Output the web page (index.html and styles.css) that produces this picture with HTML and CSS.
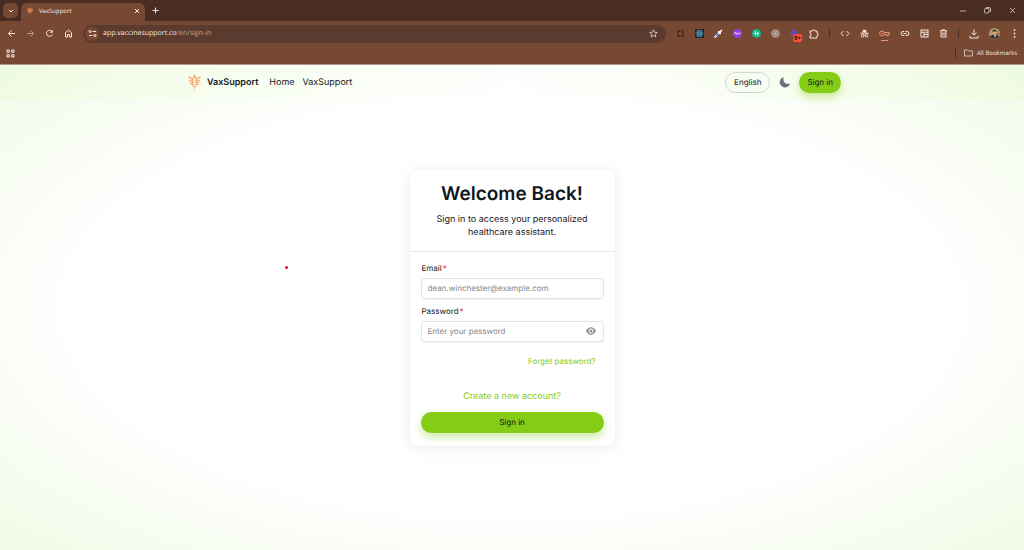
FILE: index.html
```html
<!DOCTYPE html>
<html lang="en">
<head>
    <meta charset="UTF-8">
    <meta name="viewport" content="width=device-width, initial-scale=1.0">
    <title>VaxSupport</title>
    <link rel="stylesheet" href="styles.css">
</head>
<body>

<!-- Browser window -->
<div class="browser">
    <div class="tab-strip">
        <button class="tab-search" aria-label="Search tabs">
            <svg width="6" height="6" viewBox="0 0 6 6"><path d="M1 2l2 2 2-2" class="line"/></svg>
        </button>
        <div class="tab">
            <svg width="6" height="8" viewBox="0 0 12 16"><path d="M6 0l2 3 4 0-1 6-4 3-1 4-1-4-4-3-1-6h4z" fill="#c77b4c"/></svg>
            <span class="tab-title">VaxSupport</span>
            <button class="icon-button" aria-label="Close tab">
                <svg width="6" height="6" viewBox="0 0 6 6"><path d="M1 1l4 4M5 1l-4 4" class="line"/></svg>
            </button>
        </div>
        <button class="new-tab" aria-label="New tab">
            <svg width="7" height="7" viewBox="0 0 7 7"><path d="M3.500 .5v6M.5 3.500h6" class="line"/></svg>
        </button>
        <div class="window-controls">
            <button class="icon-button" aria-label="Minimize">
                <svg width="6" height="6" viewBox="0 0 6 6"><path d="M0 3h6" class="line thin"/></svg>
            </button>
            <button class="icon-button" aria-label="Restore">
                <svg width="7" height="7" viewBox="0 0 7 7"><rect x=".5" y="1.500" width="4.500" height="4.500" rx="1" class="line thin"/><path d="M2 .5h3q1.500 0 1.500 1.500v3" class="line thin"/></svg>
            </button>
            <button class="icon-button" aria-label="Close">
                <svg width="7" height="7" viewBox="0 0 7 7"><path d="M1 1l5 5M6 1l-5 5" class="line thin"/></svg>
            </button>
        </div>
    </div>

    <div class="toolbar">
        <div class="tools">
            <button class="icon-button" aria-label="Back">
                <svg width="9" height="9" viewBox="0 0 9 9"><path d="M8 4.500H1.500M4.500 1.500l-3 3 3 3" class="line"/></svg>
            </button>
            <button class="icon-button faded" aria-label="Forward">
                <svg width="9" height="9" viewBox="0 0 9 9"><path d="M1 4.500h6.500M4.500 1.500l3 3-3 3" class="line"/></svg>
            </button>
            <button class="icon-button" aria-label="Reload">
                <svg width="9" height="9" viewBox="0 0 9 9"><path d="M7.300 5.500a3 3 0 1 1-.4-3" class="line"/><path d="M7.800 .8v3H4.800z" fill="#f6e9e3"/></svg>
            </button>
            <button class="icon-button" aria-label="Home">
                <svg width="9" height="9" viewBox="0 0 9 9"><path d="M1.500 3.700l3-2.500 3 2.500V8h-2V5.500h-2V8h-2z" class="line"/></svg>
            </button>
        </div>
        <div class="address">
            <button class="site-info" aria-label="Site information">
                <svg width="9" height="9" viewBox="0 0 9 9"><path d="M4.500 2.500H8M1 6.500h3.500" class="line"/><circle cx="2" cy="2.500" r="1" class="line"/><circle cx="7" cy="6.500" r="1" class="line"/></svg>
            </button>
            <span class="url">app.vaccinesupport.co<span class="path">/en/sign-in</span></span>
            <button class="icon-button" aria-label="Bookmark this page">
                <svg width="9" height="9" viewBox="0 0 9 9"><path d="M4.500 .8l1.100 2.500 2.700.2-2.100 1.800.7 2.700-2.400-1.500L2.100 8l.7-2.700L.7 3.500l2.700-.2z" class="line thin"/></svg>
            </button>
        </div>
        <div class="tools">
            <button class="icon-button" aria-label="Sync">
                <svg width="9" height="9" viewBox="0 0 9 9"><circle cx="4.500" cy="4.500" r="3" fill="none" stroke="#2b211d" stroke-width="1.200" stroke-dasharray="3.700 1"/></svg>
            </button>
            <button class="icon-button" aria-label="React tools">
                <svg width="9" height="9" viewBox="0 0 9 9"><rect width="9" height="9" fill="#20262b"/><g fill="none" stroke="#4aa9c9" stroke-width=".7"><ellipse cx="4.500" cy="4.500" rx="3.800" ry="1.500"/><ellipse cx="4.500" cy="4.500" rx="3.800" ry="1.500" transform="rotate(60 4.500 4.500)"/><ellipse cx="4.500" cy="4.500" rx="3.800" ry="1.500" transform="rotate(120 4.500 4.500)"/></g><circle cx="4.500" cy="4.500" r=".8" fill="#4aa9c9"/></svg>
            </button>
            <button class="icon-button" aria-label="Color picker">
                <svg width="9" height="9" viewBox="0 0 9 9"><path d="M1.300 7.700l3.700-3.700" stroke="#f4f4fa" stroke-width="2.200" stroke-linecap="round"/><path d="M2 7l2.500-2.500" stroke="#4762c9" stroke-width="1.200"/><path d="M4.700 2.700l1.600 1.600M6 3l1.500-1.500" stroke="#fff" stroke-width="1.700" stroke-linecap="round"/></svg>
            </button>
            <button class="icon-button" aria-label="Wave extension">
                <svg width="9" height="9" viewBox="0 0 9 9"><circle cx="4.500" cy="4.500" r="4.500" fill="#963ee8"/><path d="M1.500 5q.2-1.500 1-1.500T3.500 5q.8 1 1.200-.3.5-1.500 1.200-.7.600 1.500 1.600 0" fill="none" stroke="#fff" stroke-width=".8"/></svg>
            </button>
            <button class="icon-button" aria-label="Switch extension">
                <svg width="9" height="9" viewBox="0 0 9 9"><circle cx="4.500" cy="4.500" r="4.500" fill="#11b784"/><path d="M3.300 2v3M2 4.200l1.300 1.300 1.300-1.300M5.800 7V4M4.500 4.800l1.300-1.300 1.300 1.300" fill="none" stroke="#fff" stroke-width=".9"/></svg>
            </button>
            <button class="icon-button" aria-label="Target extension">
                <svg width="9" height="9" viewBox="0 0 9 9"><circle cx="4.500" cy="4.500" r="4.500" fill="#9b8077"/><circle cx="4.500" cy="4.500" r="2.700" fill="none" stroke="#c5b1aa" stroke-width=".7"/><circle cx="4.500" cy="4.500" r="1" fill="#d8c8c2"/></svg>
            </button>
            <button class="icon-button badged" aria-label="Blocker extension">
                <svg width="9" height="9" viewBox="0 0 9 9"><circle cx="4.500" cy="4.500" r="3" fill="#5b45a7" stroke="#6c55bf" stroke-width="2" stroke-dasharray="1.300 1"/></svg>
                <span class="badge">9+</span>
            </button>
            <button class="icon-button" aria-label="Extensions">
                <svg width="10" height="10" viewBox="0 0 10 10"><path d="M1 2h2.500q0-1.200 1.200-1.200T6 2h2v2.300q1.300 0 1.300 1.200T8 6.700V9H1V6.800q1.300 0 1.300-1.300T1 4.200z" class="line"/></svg>
            </button>
            <span class="divider"></span>
            <button class="icon-button" aria-label="View source">
                <svg width="10" height="9" viewBox="0 0 10 9"><path d="M3.500 2L1 4.500 3.500 7M6.500 2L9 4.500 6.500 7" class="line"/></svg>
            </button>
            <button class="icon-button" aria-label="Incognito">
                <svg width="9" height="9" viewBox="0 0 9 9"><path d="M2.500 3.500l.5-2.700h3l.500 2.700z" fill="#f6e9e3"/><path d="M.5 4.200h8M3.700 6.400h1.600" class="line"/><circle cx="2.500" cy="6.700" r="1.300" class="line"/><circle cx="6.500" cy="6.700" r="1.300" class="line"/></svg>
            </button>
            <button class="icon-button active" aria-label="Passwords">
                <svg width="11" height="9" viewBox="0 0 11 9"><circle cx="3" cy="4.500" r="2.400" class="accent"/><circle cx="3" cy="4.500" r=".7" fill="#ee9378"/><path d="M5.200 3.500h5v2h-1v1.300H7.700V5.500H5.200" class="accent"/></svg>
            </button>
            <button class="icon-button" aria-label="Copy link">
                <svg width="10" height="9" viewBox="0 0 10 9"><path d="M4.300 2.500H3a2 2 0 0 0 0 4h1.300M5.700 2.500H7a2 2 0 0 1 0 4H5.700M3.300 4.500h3.400" class="line"/></svg>
            </button>
            <button class="icon-button" aria-label="Reading mode">
                <svg width="9" height="9" viewBox="0 0 9 9"><rect x="1" y="1" width="7" height="7" class="line"/><path d="M1 3.200h7M4 3.200V8M4 5.500h4" class="line"/></svg>
            </button>
            <button class="icon-button" aria-label="Delete browsing data">
                <svg width="9" height="9" viewBox="0 0 9 9"><path d="M1 1.700h7M3.200 .8h2.600M2 2v6h5V2M3.800 3.500v3M5.200 3.500v3" class="line"/></svg>
            </button>
            <span class="divider"></span>
            <button class="icon-button" aria-label="Downloads">
                <svg width="10" height="10" viewBox="0 0 10 10"><path d="M5 .5v5.500M2.500 3.700L5 6.200l2.500-2.500M1 6.800V9h8V6.800" class="line"/></svg>
            </button>
            <button class="icon-button" aria-label="Profile">
                <svg width="11" height="11" viewBox="0 0 11 11"><circle cx="5.500" cy="5.500" r="5.500" fill="#a99b68"/><path d="M1 8.500q4.500-4 9 0a5.500 5.500 0 0 1-9 0z" fill="#302a28"/><path d="M5 7l1 3 1-3z" fill="#e8e0dc"/><circle cx="5.500" cy="4.500" r="2.200" fill="#d4a386"/><path d="M3.200 4q.300-2.500 2.300-2.500T7.800 4Q5 2.500 3.200 4z" fill="#30221c"/><circle cx="8.800" cy="6" r="1" fill="#b83528"/></svg>
            </button>
            <button class="icon-button" aria-label="Menu">
                <svg width="3" height="9" viewBox="0 0 3 9"><g fill="#f6e9e3"><circle cx="1.500" cy="1" r=".9"/><circle cx="1.500" cy="4.500" r=".9"/><circle cx="1.500" cy="8" r=".9"/></g></svg>
            </button>
        </div>
    </div>

    <div class="bookmarks">
        <button class="icon-button" aria-label="Apps">
            <svg width="9" height="9" viewBox="0 0 9 9"><path d="M1 1h2.300v2.300H1zM5.700 1H8v2.300H5.700zM1 5.700h2.300V8H1zM5.700 5.700H8V8H5.700z" class="line"/></svg>
        </button>
        <div class="all-bookmarks">
            <span class="divider"></span>
            <svg width="9" height="8" viewBox="0 0 9 8"><path d="M.5 1h3l1 1h4v5h-8z" class="line thin"/></svg>
            <a href="#">All Bookmarks</a>
        </div>
    </div>
</div>

<!-- Page -->
<div class="page">
    <header class="header">
        <nav class="navbar">
            <a href="#" class="brand">
                <svg width="13" height="17" viewBox="0 0 13 17">
                    <path d="M6.500 0l1.400 2.700-.8 1.300h-1.200l-.8-1.300zM5.900 12h1.200l-.6 5z" fill="#f9a66f"/>
                    <g fill="none" stroke="#f9ac78" stroke-width="1.500">
                        <path d="M.5 2.500l2 1.700h2.300v7M12.500 2.500l-2 1.700H8.200v7"/>
                        <path d="M1 6.300h3.500M1.500 8.300h3M2.300 10.300h2.500M12 6.300H8.500M11.500 8.300h-3M10.700 10.300H8.200" stroke-width="1.200"/>
                    </g>
                    <path d="M4.200 11l2.300 2 2.300-2" fill="none" stroke="#f9ac78"/>
                </svg>
                <span>VaxSupport</span>
            </a>
            <a href="#" class="nav-link">Home</a>
            <a href="#" class="nav-link">VaxSupport</a>
            <div class="nav-actions">
                <button class="button language">English</button>
                <button class="theme" aria-label="Dark mode">
                    <svg width="11" height="11" viewBox="0 0 11 11"><path d="M4.200 .5A5 5 0 1 0 10.700 6.900Q6.800 8 5 5.500Q3.700 3 4.200 .5z" fill="#6c6c76" stroke="#6c6c76" stroke-width=".6" stroke-linejoin="round"/></svg>
                </button>
                <button class="button primary">Sign in</button>
            </div>
        </nav>
    </header>

    <span class="pointer-dot"></span>

    <main class="content">
        <form class="card">
            <div class="card-header">
                <h1>Welcome Back!</h1>
                <p>Sign in to access your personalized healthcare assistant.</p>
            </div>
            <div class="card-body">
                <label for="email">Email<span class="required">*</span></label>
                <div class="field">
                    <input type="email" id="email" placeholder="dean.winchester@example.com">
                </div>
                <label for="password">Password<span class="required">*</span></label>
                <div class="field">
                    <input type="password" id="password" placeholder="Enter your password">
                    <button type="button" class="reveal" aria-label="Show password">
                        <svg width="10" height="8" viewBox="0 0 10 8"><path d="M0 4Q2 .3 5 .3T10 4Q8 7.700 5 7.700T0 4z" fill="#8f8f98"/><circle cx="5" cy="4" r="2.400" fill="#fff"/><circle cx="5" cy="4" r="1.500" fill="#8f8f98"/></svg>
                    </button>
                </div>
                <a href="#" class="forget">Forget password?</a>
                <a href="#" class="create">Create a new account?</a>
                <button type="submit" class="button primary">Sign in</button>
            </div>
        </form>
    </main>
</div>

</body>
</html>
```

FILE: styles.css
```css
* {
    box-sizing: border-box;
}
body {
    margin: 0;
    min-height: 100vh;
    display: flex;
    flex-direction: column;
    font-family: Inter, sans-serif;
    color: #11181c;
    text-rendering: geometricPrecision;
}
button {
    padding: 0;
    border: 0;
    background: none;
    font: inherit;
    color: inherit;
    text-rendering: inherit;
    cursor: pointer;
}
a {
    color: inherit;
    text-decoration: none;
}
svg {
    display: block;
    flex: none;
}

/* Browser window */
.browser {
    background-color: #774933;
    border-bottom: 1px solid #b3998c;
    font-family: "Open Sans", sans-serif;
    font-size: 6px;
    font-weight: 500;
    color: #f6e9e3;
}
.line {
    fill: none;
    stroke: #f6e9e3;
    stroke-width: 1;
}
.thin {
    stroke-width: 0.7;
}
.accent {
    fill: none;
    stroke: #ee9378;
    stroke-width: 1;
}
.icon-button {
    display: flex;
    align-items: center;
    justify-content: center;
    min-width: 9px;
    height: 12px;
}
.faded {
    opacity: 0.5;
}
.tab-strip {
    display: flex;
    align-items: center;
    height: 21px;
    padding-left: 3px;
    background-color: #492d22;
}
.tab-search {
    display: flex;
    align-items: center;
    justify-content: center;
    width: 15px;
    height: 15px;
    border-radius: 5px;
    background-color: #774933;
}
.tab {
    display: flex;
    align-items: center;
    gap: 6px;
    align-self: flex-end;
    width: 124px;
    height: 18px;
    margin-left: 3px;
    padding: 0 4px 2px 6px;
    border-radius: 6px 6px 0 0;
    background-color: #774933;
}
.tab-title {
    flex: 1;
}
.new-tab {
    margin-left: 7px;
}
.window-controls {
    display: flex;
    gap: 16px;
    margin-left: auto;
    padding-right: 7px;
}
.toolbar {
    display: flex;
    align-items: center;
    gap: 10px;
    height: 25px;
    padding: 0 5px 0 7px;
}
.tools {
    display: flex;
    align-items: center;
    gap: 10px;
}
.address {
    flex: 1;
    display: flex;
    align-items: center;
    gap: 4px;
    height: 18px;
    padding: 0 8px 0 2px;
    border-radius: 9px;
    background-color: #5b3a30;
}
.site-info {
    display: flex;
    align-items: center;
    justify-content: center;
    width: 14px;
    height: 14px;
    border-radius: 7px;
    background-color: #774933;
}
.url {
    flex: 1;
    font-size: 7px;
}
.path {
    color: #bda79e;
}
.divider {
    width: 1px;
    height: 9px;
    background-color: #492d22;
}
.badged {
    position: relative;
}
.badge {
    position: absolute;
    left: 3px;
    top: 6px;
    width: 9px;
    height: 8px;
    border-radius: 2px;
    background-color: #fb5130;
    color: #2b1712;
    font-size: 6px;
    font-weight: bold;
    line-height: 8px;
}
.active {
    position: relative;
}
.active::after {
    content: "";
    position: absolute;
    left: 2px;
    right: 2px;
    bottom: -1px;
    height: 1px;
    background-color: #ee9378;
}
.bookmarks {
    display: flex;
    align-items: center;
    justify-content: space-between;
    height: 18px;
    padding: 0 7px 4px 6px;
}
.all-bookmarks {
    display: flex;
    align-items: center;
    gap: 4px;
}
.all-bookmarks .divider {
    margin-right: 4px;
}

/* Page */
.page {
    position: relative;
    flex: 1;
    display: flex;
    flex-direction: column;
    background: radial-gradient(ellipse at center, #ffffff 60%, #f0fae5 100%);
}
.header {
    height: 34px;
    background: linear-gradient(to right, #ecfbd980, #ffffff80 50%, #ecfbd980);
}
.navbar {
    display: flex;
    align-items: center;
    max-width: 658px;
    height: 100%;
    margin: 0 auto;
    padding-left: 5px;
    font-size: 9px;
}
.brand {
    display: flex;
    align-items: center;
    gap: 6px;
    font-weight: 600;
}
.nav-link {
    margin-left: 8px;
}
.brand + .nav-link {
    margin-left: 11px;
}
.nav-actions {
    display: flex;
    align-items: center;
    gap: 9px;
    margin-left: auto;
}
.button {
    height: 21px;
    padding: 0 8px;
    border-radius: 11px;
    font-size: 8px;
}
.language {
    border: 1px solid #d4d4d8;
}
.primary {
    background-color: #84cc16;
    box-shadow: 0 4px 8px #84cc1666;
}
.pointer-dot {
    position: absolute;
    left: 27.8%;
    top: 41.5%;
    width: 3px;
    height: 3px;
    border-radius: 50%;
    background-color: #e60f1e;
}
.content {
    flex: 1;
    display: flex;
    align-items: center;
    justify-content: center;
    padding-bottom: 34px;
}
.card {
    width: 205px;
    border-radius: 8px;
    background-color: #ffffff;
    box-shadow: 0 0 3px #00000008, 0 2px 16px #00000014;
}
.card-header {
    padding: 11px 20px 12px;
    border-bottom: 1px solid #e8e8ea;
    text-align: center;
}
.card-header h1 {
    margin: 0 0 6px;
    font-size: 19px;
    font-weight: 600;
    line-height: 26px;
}
.card-header p {
    margin: 0;
    font-size: 9px;
    line-height: 13px;
}
.card-body {
    display: flex;
    flex-direction: column;
    padding: 10px 11px 13px;
}
.card-body label {
    margin-bottom: 4px;
    padding-left: 1px;
    font-size: 8px;
    line-height: 12px;
}
.required {
    margin-left: 1px;
    color: #f31260;
}
.field {
    display: flex;
    align-items: center;
    height: 21px;
    margin-bottom: 6px;
    padding: 0 7px 0 6px;
    border: 1px solid #e4e4e7;
    border-radius: 4px;
    box-shadow: 0 1px 1px #0000000d;
}
.field input {
    flex: 1;
    min-width: 0;
    padding: 0;
    border: 0;
    outline: 0;
    background: none;
    font: inherit;
    font-size: 8px;
    text-rendering: inherit;
}
.field input::placeholder {
    color: #85858d;
}
.forget {
    align-self: flex-end;
    margin: 7px 8px 23px 0;
    font-size: 8px;
    line-height: 12px;
    color: #84cc16;
}
.create {
    align-self: center;
    margin-bottom: 9px;
    font-size: 9px;
    line-height: 13px;
    color: #84cc16;
}
```
